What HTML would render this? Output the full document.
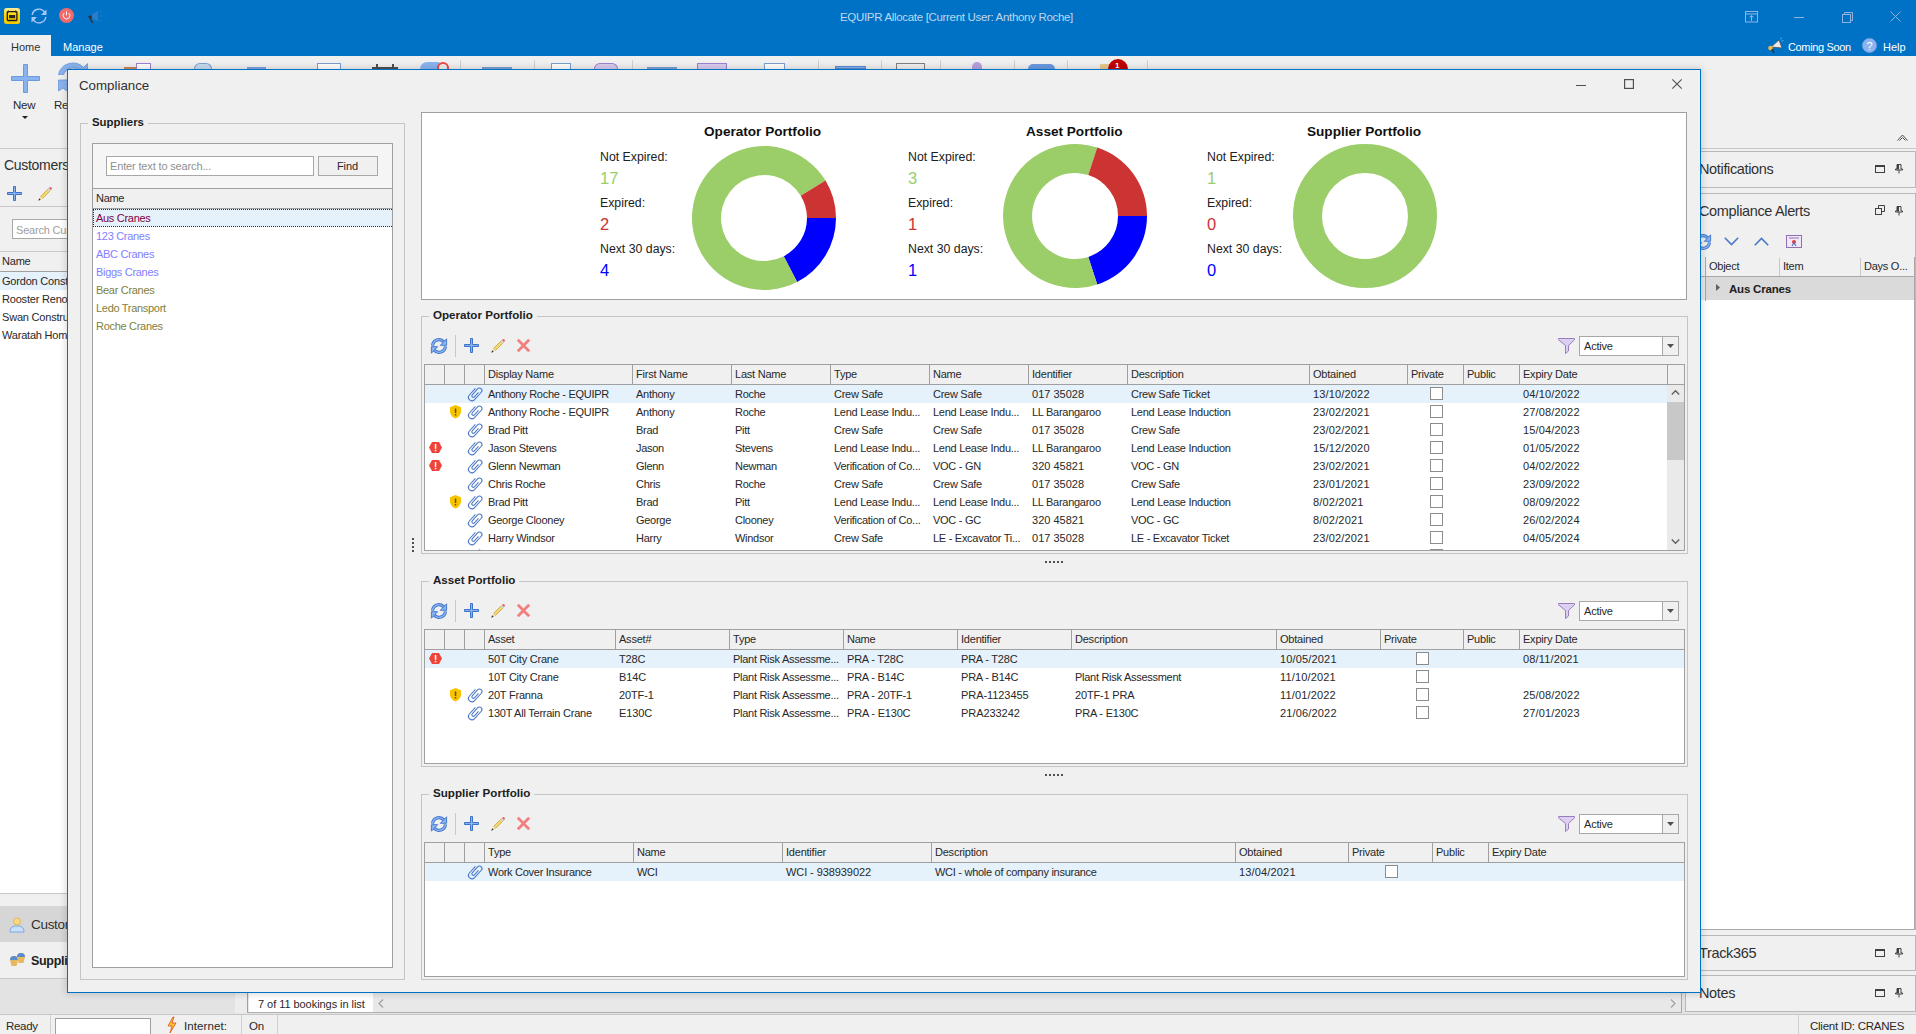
<!DOCTYPE html>
<html><head><meta charset="utf-8"><title>EQUIPR Allocate</title>
<style>
html,body{margin:0;padding:0;}
body{width:1916px;height:1034px;overflow:hidden;position:relative;background:#F0F0F0;font-family:"Liberation Sans", sans-serif;}
svg{display:block;overflow:visible}
</style></head><body>
<div style="position:absolute;left:0px;top:0px;width:1916px;height:56px;background:#0072C6"></div><div style="position:absolute;left:0px;top:35px;width:51px;height:21px;background:#F0F0F0"></div><div style="position:absolute;left:11px;top:41px;font-size:11px;line-height:13px;color:#303030;font-weight:400;white-space:nowrap;">Home</div><div style="position:absolute;left:63px;top:41px;font-size:11px;line-height:13px;color:#FFFFFF;font-weight:400;white-space:nowrap;">Manage</div><div style="position:absolute;left:840px;top:11px;font-size:11.5px;line-height:13px;color:#BFD7EE;font-weight:400;letter-spacing:-0.32px;white-space:nowrap;">EQUIPR Allocate [Current User: Anthony Roche]</div><svg style="position:absolute;left:4px;top:8px;" width="16" height="16" viewBox="0 0 16 16"><defs><linearGradient id="cg" x1="0" y1="0" x2="0" y2="1"><stop offset="0" stop-color="#F8EBA0"/><stop offset="0.45" stop-color="#FFD400"/><stop offset="1" stop-color="#F5C800"/></linearGradient></defs><rect x="0" y="0" width="16" height="16" rx="2.5" fill="url(#cg)"/><rect x="3.3" y="3.7" width="9.6" height="8.8" rx="0.8" fill="none" stroke="#1A1A1A" stroke-width="1.3"/><path d="M4.5 2.5 V4.5 M11.5 2.5 V4.5" stroke="#303030" stroke-width="1"/><rect x="5" y="7" width="6.2" height="3.2" fill="#302810"/></svg><svg style="position:absolute;left:31px;top:8px;" width="16" height="16" viewBox="0 0 16 16"><g fill="none" stroke="#A8C8F8" stroke-width="1.4"><path d="M1.2 7 A6.8 6.8 0 0 1 13.8 4.5"/><path d="M14.8 9 A6.8 6.8 0 0 1 2.2 11.5"/></g><path d="M15.5 1.5 V7 H10 Z" fill="#A8C8F8"/><path d="M0.5 14.5 V9 H6 Z" fill="#A8C8F8"/></svg><svg style="position:absolute;left:59px;top:8px;" width="15" height="15" viewBox="0 0 15 15"><circle cx="7.5" cy="7.5" r="7.5" fill="#F06A6A"/><path d="M5.2 5 A3.4 3.4 0 1 0 9.8 5" fill="none" stroke="#fff" stroke-width="0.9"/><path d="M7.5 3.2 V7.4" stroke="#fff" stroke-width="0.9"/></svg><svg style="position:absolute;left:86px;top:9px;" width="17" height="15" viewBox="0 0 17 15"><path d="M5 6 L12 1.5 V12.5 L5 9 Z" fill="#3A80C8" opacity="0.75"/><path d="M13.5 3 L16 1.5 M13.5 7 H16.5 M13.5 11 L16 12.5" stroke="#3A80C8" stroke-width="0.8" opacity="0.6"/><path d="M2 7.5 L5.5 6 L6 9.5 L4 10 Z" fill="#303030"/><path d="M4.5 10 L6.5 14" stroke="#303030" stroke-width="1.6"/></svg><svg style="position:absolute;left:1745px;top:11px;" width="13" height="12" viewBox="0 0 13 12"><rect x="0.5" y="0.5" width="12" height="10.5" fill="none" stroke="#8DB6E2"/><path d="M0.5 3 H12.5 M6.5 10 V4.5 M4.5 6.5 L6.5 4.5 L8.5 6.5" fill="none" stroke="#8DB6E2"/></svg><div style="position:absolute;left:1794px;top:17px;width:10px;height:1px;background:#8DB6E2"></div><svg style="position:absolute;left:1842px;top:12px;" width="11" height="11" viewBox="0 0 11 11"><rect x="0.5" y="2.5" width="8" height="8" fill="none" stroke="#8DB6E2"/><path d="M2.5 2.5 V0.5 H10.5 V8.5 H8.5" fill="none" stroke="#8DB6E2"/></svg><svg style="position:absolute;left:1890px;top:11px;" width="11" height="11" viewBox="0 0 11 11"><path d="M0.5 0.5 L10.5 10.5 M10.5 0.5 L0.5 10.5" stroke="#8DB6E2" stroke-width="1"/></svg><svg style="position:absolute;left:1767px;top:38px;" width="17" height="16" viewBox="0 0 17 16"><path d="M4 9 L12 2 L15 10 Z" fill="#E8E8E8" stroke="#505050" stroke-width="0.8"/><circle cx="3.5" cy="10" r="2.3" fill="#F4B840"/><path d="M5 11 L7 15" stroke="#303030" stroke-width="1.5"/><path d="M13 1 L15 0 M14.5 3 L16.5 2.5" stroke="#60C0E0" stroke-width="0.8"/></svg><div style="position:absolute;left:1788px;top:41px;font-size:11px;line-height:13px;color:#FFFFFF;font-weight:400;letter-spacing:-0.35px;white-space:nowrap;">Coming Soon</div><svg style="position:absolute;left:1862px;top:38px;" width="15" height="15" viewBox="0 0 15 15"><circle cx="7.5" cy="7.5" r="7.2" fill="#8AB4F0" stroke="#6A94D8" stroke-width="0.6"/><text x="7.5" y="11.5" font-size="11" text-anchor="middle" fill="#fff" font-family="Liberation Sans">?</text></svg><div style="position:absolute;left:1883px;top:41px;font-size:11px;line-height:13px;color:#FFFFFF;font-weight:400;white-space:nowrap;">Help</div><div style="position:absolute;left:0px;top:56px;width:1916px;height:92px;background:#F0F0F0"></div><div style="position:absolute;left:0px;top:148px;width:1916px;height:1px;background:#C8C8C8"></div><svg style="position:absolute;left:11px;top:64px;" width="30" height="29" viewBox="0 0 30 29"><path d="M12.5 0.5 H16.5 V12.5 H28.5 V16.5 H16.5 V28.5 H12.5 V16.5 H0.5 V12.5 H12.5 Z" fill="#8AB4F0" stroke="#6A9AE0" stroke-width="1"/></svg><div style="position:absolute;left:13px;top:99px;font-size:11.5px;line-height:13px;color:#282828;font-weight:400;letter-spacing:-0.2px;white-space:nowrap;">New</div><svg style="position:absolute;left:22px;top:116px;" width="6" height="3" viewBox="0 0 6 3"><path d="M0 0 H6 L3 3 Z" fill="#202020"/></svg><div style="position:absolute;left:54px;top:99px;font-size:11.5px;line-height:13px;color:#282828;font-weight:400;letter-spacing:-0.2px;white-space:nowrap;">Re</div><svg style="position:absolute;left:50px;top:56px;" width="50" height="44" viewBox="0 0 50 44"><path d="M8.4 18.5 A15 15 0 0 1 33.6 11.4 L37.5 7.5 V21 H24 L30.07 14.93 A10 10 0 0 0 13.6 18.5 Z" fill="#8AB4F0" stroke="#6A98DC" stroke-width="0.8"/><path d="M8.5 24 H20 L16.5 27.5 A9.5 9.5 0 0 0 28 31 L32 34 A14.5 14.5 0 0 1 13 32 L8.5 35 Z" fill="#8AB4F0" stroke="#6A98DC" stroke-width="0.8"/></svg><div style="position:absolute;left:124px;top:67px;width:13px;height:2px;background:#D08850"></div><div style="position:absolute;left:136px;top:63px;width:15px;height:6px;background:#fff;border:1px solid #A080D0;border-bottom:none;box-sizing:border-box"></div><div style="position:absolute;left:194px;top:63px;width:18px;height:6px;background:#C8DCF0;border:1px solid #7AA0D0;border-radius:9px 9px 0 0;border-bottom:none;box-sizing:border-box"></div><div style="position:absolute;left:247px;top:67px;width:19px;height:2px;background:#7AA4E0"></div><div style="position:absolute;left:317px;top:63px;width:24px;height:6px;background:#fff;border:1px solid #7AA0D0;border-bottom:none;box-sizing:border-box"></div><div style="position:absolute;left:372px;top:67px;width:26px;height:2px;background:#505050"></div><div style="position:absolute;left:376px;top:64px;width:2px;height:3px;background:#505050"></div><div style="position:absolute;left:392px;top:64px;width:2px;height:3px;background:#505050"></div><div style="position:absolute;left:420px;top:62px;width:24px;height:7px;background:#8AB4F0;border-radius:12px 12px 0 0"></div><div style="position:absolute;left:437px;top:62px;width:12px;height:7px;background:#F0F0F0;border:2px solid #F04848;border-radius:6px 6px 0 0;border-bottom:none;box-sizing:border-box"></div><div style="position:absolute;left:460px;top:60px;width:1px;height:9px;background:#D0D0D0"></div><div style="position:absolute;left:482px;top:67px;width:30px;height:2px;background:#7AA0D0"></div><div style="position:absolute;left:534px;top:60px;width:1px;height:9px;background:#D0D0D0"></div><div style="position:absolute;left:551px;top:63px;width:20px;height:6px;background:#fff;border:1px solid #7AA0D0;border-bottom:none;box-sizing:border-box"></div><div style="position:absolute;left:594px;top:63px;width:24px;height:6px;background:#D8CCF0;border:1px solid #A080D0;border-radius:12px 12px 0 0;border-bottom:none;box-sizing:border-box"></div><div style="position:absolute;left:632px;top:60px;width:1px;height:9px;background:#D0D0D0"></div><div style="position:absolute;left:647px;top:67px;width:30px;height:2px;background:#7AA0D0"></div><div style="position:absolute;left:697px;top:63px;width:30px;height:6px;background:#D8CCF0;border:1px solid #A080D0;border-bottom:none;box-sizing:border-box"></div><div style="position:absolute;left:764px;top:63px;width:21px;height:6px;background:#fff;border:1px solid #7AA0D0;border-bottom:none;box-sizing:border-box"></div><div style="position:absolute;left:818px;top:60px;width:1px;height:9px;background:#D0D0D0"></div><div style="position:absolute;left:835px;top:66px;width:31px;height:3px;background:#8AB4F0;border:1px solid #5A8AD0;box-sizing:border-box"></div><div style="position:absolute;left:881px;top:60px;width:1px;height:9px;background:#D0D0D0"></div><div style="position:absolute;left:896px;top:63px;width:29px;height:6px;background:#F0F0F0;border:1px solid #808080;border-bottom:none;box-sizing:border-box"></div><div style="position:absolute;left:940px;top:60px;width:1px;height:9px;background:#D0D0D0"></div><div style="position:absolute;left:972px;top:62px;width:10px;height:7px;background:#B8A0E0;border-radius:5px 5px 0 0"></div><div style="position:absolute;left:1014px;top:60px;width:1px;height:9px;background:#D0D0D0"></div><div style="position:absolute;left:1028px;top:64px;width:27px;height:5px;background:#6A9AE0;border-radius:14px 14px 0 0"></div><div style="position:absolute;left:1067px;top:60px;width:1px;height:9px;background:#D0D0D0"></div><div style="position:absolute;left:1100px;top:64px;width:10px;height:5px;background:#E8C890"></div><div style="position:absolute;left:1108px;top:59px;width:20px;height:10px;background:#C00000;border-radius:10px 10px 0 0"></div><div style="position:absolute;left:1115px;top:61px;font-size:8px;line-height:9px;color:#fff;font-weight:700;white-space:nowrap;">1</div><div style="position:absolute;left:1147px;top:60px;width:1px;height:9px;background:#D0D0D0"></div><svg style="position:absolute;left:1897px;top:133px;" width="11" height="8" viewBox="0 0 11 8"><path d="M0.5 7.5 L5.5 2 L10.5 7.5 M2.5 7.5 L5.5 4.5 L8.5 7.5" fill="none" stroke="#505050" stroke-width="1"/></svg><div style="position:absolute;left:4px;top:157px;font-size:14px;line-height:16px;color:#303030;font-weight:400;letter-spacing:-0.3px;white-space:nowrap;">Customers</div><svg style="position:absolute;left:7px;top:186px;" width="15" height="15" viewBox="0 0 15 15"><path d="M6.5 0.5 H8.5 V6.5 H14.5 V8.5 H8.5 V14.5 H6.5 V8.5 H0.5 V6.5 H6.5 Z" fill="#8AB4F0" stroke="#3D72C8" stroke-width="1"/></svg><svg style="position:absolute;left:37px;top:186px;" width="16" height="16" viewBox="0 0 16 16"><path d="M3.5 10.5 L11 3 L13 5 L5.5 12.5 Z" fill="#F2D670" stroke="#C9A540" stroke-width="0.8"/>
<path d="M11 3 L12.5 1.5 A1.2 1.2 0 0 1 14.5 3.5 L13 5 Z" fill="#E86060"/>
<path d="M10.6 3.4 L12 2 L14 4 L12.6 5.4 Z" fill="#C8D8E8"/>
<path d="M3.5 10.5 L5.5 12.5 L1.5 14.5 Z" fill="#F5E3B0"/>
<path d="M2.3 12.3 L3.7 13.7 L1.2 14.8 Z" fill="#303030"/></svg><div style="position:absolute;left:0px;top:206px;width:67px;height:1px;background:#C8C8C8"></div><div style="position:absolute;left:12px;top:219px;width:80px;height:20px;background:#fff;border:1px solid #A8A8A8;box-sizing:border-box"></div><div style="position:absolute;left:16px;top:224px;font-size:11px;line-height:13px;color:#A0A0A0;font-weight:400;letter-spacing:-0.2px;white-space:nowrap;">Search Customers</div><div style="position:absolute;left:0px;top:251px;width:67px;height:1px;background:#C8C8C8"></div><div style="position:absolute;left:0px;top:252px;width:67px;height:20px;background:#F0F0F0"></div><div style="position:absolute;left:2px;top:255px;font-size:11px;line-height:13px;color:#282828;font-weight:400;letter-spacing:-0.2px;white-space:nowrap;">Name</div><div style="position:absolute;left:0px;top:271px;width:67px;height:1px;background:#A0A0A0"></div><div style="position:absolute;left:0px;top:272px;width:67px;height:621px;background:#fff"></div><div style="position:absolute;left:0px;top:272px;width:67px;height:18px;background:#E5F1FB"></div><div style="position:absolute;left:2px;top:275px;font-size:11px;line-height:13px;color:#282828;font-weight:400;letter-spacing:-0.2px;white-space:nowrap;">Gordon Construction</div><div style="position:absolute;left:2px;top:293px;font-size:11px;line-height:13px;color:#282828;font-weight:400;letter-spacing:-0.2px;white-space:nowrap;">Rooster Renovations</div><div style="position:absolute;left:2px;top:311px;font-size:11px;line-height:13px;color:#282828;font-weight:400;letter-spacing:-0.2px;white-space:nowrap;">Swan Construction</div><div style="position:absolute;left:2px;top:329px;font-size:11px;line-height:13px;color:#282828;font-weight:400;letter-spacing:-0.2px;white-space:nowrap;">Waratah Homes</div><div style="position:absolute;left:0px;top:893px;width:67px;height:1px;background:#C8C8C8"></div><div style="position:absolute;left:0px;top:906px;width:67px;height:36px;background:#D6D6D6"></div><svg style="position:absolute;left:9px;top:917px;" width="16" height="16" viewBox="0 0 16 16"><circle cx="8" cy="4.5" r="3.5" fill="#F8D880" stroke="#D8B050" stroke-width="0.8"/><path d="M1 15 C1 10 4 9 8 9 C12 9 15 10 15 15 Z" fill="#C8E0F8" stroke="#6A9AE0" stroke-width="0.8"/></svg><div style="position:absolute;left:31px;top:917px;font-size:13.5px;line-height:16px;color:#303030;font-weight:400;letter-spacing:-0.3px;white-space:nowrap;">Customers</div><svg style="position:absolute;left:9px;top:952px;" width="17" height="17" viewBox="0 0 17 17"><path d="M1 8 A4 4 0 0 1 9 8 L7.5 14 L2.5 14 Z" fill="#E8B860"/><path d="M1 8 A4 4 0 0 1 9 8 Z" fill="#5A8AD0"/><path d="M8 5 A4 4 0 0 1 16 5 L14.5 11 L9.5 11 Z" fill="#E8B860"/><path d="M8 5 A4 4 0 0 1 16 5 Z" fill="#5A8AD0"/></svg><div style="position:absolute;left:31px;top:954px;font-size:12.5px;line-height:14px;color:#202020;font-weight:700;letter-spacing:-0.3px;white-space:nowrap;">Suppliers</div><div style="position:absolute;left:0px;top:978px;width:235px;height:1px;background:#C8C8C8"></div><div style="position:absolute;left:0px;top:979px;width:1916px;height:35px;background:#E3E3E3"></div><div style="position:absolute;left:235px;top:993px;width:1447px;height:20px;background:#EDEDED"></div><div style="position:absolute;left:247px;top:993px;width:1px;height:20px;background:#A0A0A0"></div><div style="position:absolute;left:248px;top:993px;width:1433px;height:19px;background:#E8E8E8"></div><div style="position:absolute;left:1681px;top:993px;width:1px;height:20px;background:#A8A8A8"></div><div style="position:absolute;left:249px;top:993px;width:124px;height:19px;background:#fff"></div><div style="position:absolute;left:258px;top:998px;font-size:11px;line-height:13px;color:#282828;font-weight:400;letter-spacing:-0.05px;white-space:nowrap;">7 of 11 bookings in list</div><svg style="position:absolute;left:378px;top:999px;" width="6" height="9" viewBox="0 0 6 9"><path d="M5 0.5 L1 4.5 L5 8.5" fill="none" stroke="#A0A0A0" stroke-width="1.2"/></svg><svg style="position:absolute;left:1670px;top:999px;" width="6" height="9" viewBox="0 0 6 9"><path d="M1 0.5 L5 4.5 L1 8.5" fill="none" stroke="#A0A0A0" stroke-width="1.2"/></svg><div style="position:absolute;left:247px;top:1012px;width:1435px;height:1px;background:#B0B0B0"></div><div style="position:absolute;left:0px;top:1014px;width:1916px;height:1px;background:#C8C8C8"></div><div style="position:absolute;left:0px;top:1015px;width:1916px;height:19px;background:#F0F0F0"></div><div style="position:absolute;left:6px;top:1020px;font-size:11.5px;line-height:13px;color:#282828;font-weight:400;letter-spacing:-0.3px;white-space:nowrap;">Ready</div><div style="position:absolute;left:50px;top:1015px;width:1px;height:19px;background:#D0D0D0"></div><div style="position:absolute;left:55px;top:1018px;width:96px;height:16px;background:#fff;border:1px solid #A0A0A0;box-sizing:border-box;border-bottom:none"></div><svg style="position:absolute;left:167px;top:1017px;" width="10" height="16" viewBox="0 0 10 16"><path d="M6 0 L1 9 H5 L3 16 L9 6 H5 L7 0 Z" fill="#F8C030" stroke="#E05010" stroke-width="0.8"/></svg><div style="position:absolute;left:184px;top:1020px;font-size:11.5px;line-height:13px;color:#282828;font-weight:400;letter-spacing:0.1px;white-space:nowrap;">Internet:</div><div style="position:absolute;left:241px;top:1015px;width:1px;height:19px;background:#D0D0D0"></div><div style="position:absolute;left:249px;top:1020px;font-size:11.5px;line-height:13px;color:#282828;font-weight:400;letter-spacing:-0.2px;white-space:nowrap;">On</div><div style="position:absolute;left:277px;top:1015px;width:1px;height:19px;background:#D0D0D0"></div><div style="position:absolute;left:1798px;top:1015px;width:1px;height:19px;background:#D0D0D0"></div><div style="position:absolute;left:1810px;top:1020px;font-size:11.5px;line-height:13px;color:#282828;font-weight:400;letter-spacing:-0.25px;white-space:nowrap;">Client ID: CRANES</div><div style="position:absolute;left:1685px;top:151px;width:231px;height:37px;background:#F0F0F0;border:1px solid #B8B8B8;box-sizing:border-box"></div><div style="position:absolute;left:1699px;top:161px;font-size:14.5px;line-height:17px;color:#303030;font-weight:400;letter-spacing:-0.35px;white-space:nowrap;">Notifications</div><svg style="position:absolute;left:1875px;top:165px;" width="10" height="8" viewBox="0 0 10 8"><rect x="0.5" y="0.5" width="9" height="7" fill="none" stroke="#404040"/><path d="M0.5 1.5 H9.5" stroke="#404040"/></svg><svg style="position:absolute;left:1895px;top:164px;" width="8" height="10" viewBox="0 0 8 10"><path d="M2 0.5 H6 V5 H7.5 V6 H0.5 V5 H2 Z M4 6 V9.5" fill="none" stroke="#404040"/><rect x="2" y="0.5" width="2" height="5" fill="#404040"/></svg><div style="position:absolute;left:1685px;top:193px;width:231px;height:737px;background:#F0F0F0;border:1px solid #B8B8B8;box-sizing:border-box"></div><div style="position:absolute;left:1699px;top:203px;font-size:14.5px;line-height:17px;color:#303030;font-weight:400;letter-spacing:-0.35px;white-space:nowrap;">Compliance Alerts</div><svg style="position:absolute;left:1875px;top:205px;" width="10" height="10" viewBox="0 0 10 10"><rect x="0.5" y="3.5" width="6" height="6" fill="none" stroke="#404040"/><path d="M3.5 3.5 V0.5 H9.5 V6.5 H6.5" fill="none" stroke="#404040"/></svg><svg style="position:absolute;left:1895px;top:206px;" width="8" height="10" viewBox="0 0 8 10"><path d="M2 0.5 H6 V5 H7.5 V6 H0.5 V5 H2 Z M4 6 V9.5" fill="none" stroke="#404040"/><rect x="2" y="0.5" width="2" height="5" fill="#404040"/></svg><svg style="position:absolute;left:1695px;top:234px;" width="16" height="16" viewBox="0 0 16 16"><path d="M1.6 7.6 A6.4 6.4 0 0 1 12.8 3.9" fill="none" stroke="#3D72C8" stroke-width="3.2"/><path d="M1.6 7.6 A6.4 6.4 0 0 1 12.8 3.9" fill="none" stroke="#8AB4F0" stroke-width="1.4"/><path d="M15.6 0.8 V7.3 H9.3 Z" fill="#8AB4F0" stroke="#3D72C8" stroke-width="0.9" stroke-linejoin="miter"/><g transform="rotate(180 8 8)"><path d="M1.6 7.6 A6.4 6.4 0 0 1 12.8 3.9" fill="none" stroke="#3D72C8" stroke-width="3.2"/><path d="M1.6 7.6 A6.4 6.4 0 0 1 12.8 3.9" fill="none" stroke="#8AB4F0" stroke-width="1.4"/><path d="M15.6 0.8 V7.3 H9.3 Z" fill="#8AB4F0" stroke="#3D72C8" stroke-width="0.9" stroke-linejoin="miter"/></g></svg><svg style="position:absolute;left:1724px;top:237px;" width="15" height="9" viewBox="0 0 15 9"><path d="M0.8 0.8 L7.5 7.5 L14.2 0.8" fill="none" stroke="#4A78C8" stroke-width="1.6"/></svg><svg style="position:absolute;left:1754px;top:237px;" width="15" height="9" viewBox="0 0 15 9"><path d="M0.8 8.2 L7.5 1.5 L14.2 8.2" fill="none" stroke="#4A78C8" stroke-width="1.6"/></svg><svg style="position:absolute;left:1786px;top:235px;" width="16" height="13" viewBox="0 0 16 13"><rect x="0.5" y="0.5" width="15" height="12" fill="#F0E8F8" stroke="#9070B0"/><path d="M3 3 H13" stroke="#9070B0"/><circle cx="8" cy="7" r="2" fill="#E04040"/><path d="M6 11 L8 8 L10 11" fill="none" stroke="#4A78C8" stroke-width="1.2"/></svg><div style="position:absolute;left:1686px;top:300px;width:228px;height:629px;background:#fff"></div><div style="position:absolute;left:1705px;top:257px;width:1px;height:44px;background:#A8A8A8"></div><div style="position:absolute;left:1779px;top:258px;width:1px;height:19px;background:#C8C8C8"></div><div style="position:absolute;left:1860px;top:258px;width:1px;height:19px;background:#C8C8C8"></div><div style="position:absolute;left:1709px;top:260px;font-size:11px;line-height:13px;color:#282828;font-weight:400;letter-spacing:-0.25px;white-space:nowrap;">Object</div><div style="position:absolute;left:1783px;top:260px;font-size:11px;line-height:13px;color:#282828;font-weight:400;letter-spacing:-0.25px;white-space:nowrap;">Item</div><div style="position:absolute;left:1864px;top:260px;font-size:11px;line-height:13px;color:#282828;font-weight:400;letter-spacing:-0.25px;white-space:nowrap;">Days O...</div><div style="position:absolute;left:1686px;top:276px;width:228px;height:1px;background:#A8A8A8"></div><div style="position:absolute;left:1686px;top:277px;width:19px;height:23px;background:#E8E8E8"></div><div style="position:absolute;left:1706px;top:277px;width:208px;height:23px;background:#DADADA"></div><svg style="position:absolute;left:1716px;top:284px;" width="4" height="7" viewBox="0 0 4 7"><path d="M0 0 L4 3.5 L0 7 Z" fill="#606060"/></svg><div style="position:absolute;left:1729px;top:283px;font-size:11.5px;line-height:13px;color:#202020;font-weight:700;letter-spacing:-0.2px;white-space:nowrap;">Aus Cranes</div><div style="position:absolute;left:1686px;top:929px;width:229px;height:1px;background:#A8A8A8"></div><div style="position:absolute;left:1914px;top:257px;width:1px;height:673px;background:#A8A8A8"></div><div style="position:absolute;left:1685px;top:935px;width:231px;height:36px;background:#F0F0F0;border:1px solid #B8B8B8;box-sizing:border-box"></div><div style="position:absolute;left:1699px;top:945px;font-size:14.5px;line-height:17px;color:#303030;font-weight:400;letter-spacing:-0.35px;white-space:nowrap;">Track365</div><svg style="position:absolute;left:1875px;top:949px;" width="10" height="8" viewBox="0 0 10 8"><rect x="0.5" y="0.5" width="9" height="7" fill="none" stroke="#404040"/><path d="M0.5 1.5 H9.5" stroke="#404040"/></svg><svg style="position:absolute;left:1895px;top:948px;" width="8" height="10" viewBox="0 0 8 10"><path d="M2 0.5 H6 V5 H7.5 V6 H0.5 V5 H2 Z M4 6 V9.5" fill="none" stroke="#404040"/><rect x="2" y="0.5" width="2" height="5" fill="#404040"/></svg><div style="position:absolute;left:1685px;top:975px;width:231px;height:37px;background:#F0F0F0;border:1px solid #B8B8B8;box-sizing:border-box"></div><div style="position:absolute;left:1699px;top:985px;font-size:14.5px;line-height:17px;color:#303030;font-weight:400;letter-spacing:-0.35px;white-space:nowrap;">Notes</div><svg style="position:absolute;left:1875px;top:989px;" width="10" height="8" viewBox="0 0 10 8"><rect x="0.5" y="0.5" width="9" height="7" fill="none" stroke="#404040"/><path d="M0.5 1.5 H9.5" stroke="#404040"/></svg><svg style="position:absolute;left:1895px;top:988px;" width="8" height="10" viewBox="0 0 8 10"><path d="M2 0.5 H6 V5 H7.5 V6 H0.5 V5 H2 Z M4 6 V9.5" fill="none" stroke="#404040"/><rect x="2" y="0.5" width="2" height="5" fill="#404040"/></svg><div style="position:absolute;left:67px;top:69px;width:1634px;height:924px;background:#F0F0F0;border:1px solid #0072C6;box-sizing:border-box;box-shadow:0 0 7px 1px rgba(0,0,0,0.16)"></div><div style="position:absolute;left:79px;top:78px;font-size:13.3px;line-height:15px;color:#303030;font-weight:400;white-space:nowrap;">Compliance</div><div style="position:absolute;left:1576px;top:85px;width:10px;height:1px;background:#505050"></div><svg style="position:absolute;left:1624px;top:79px;" width="10" height="10" viewBox="0 0 10 10"><rect x="0.6" y="0.6" width="8.8" height="8.8" fill="none" stroke="#505050" stroke-width="1.2"/></svg><svg style="position:absolute;left:1672px;top:79px;" width="10" height="10" viewBox="0 0 10 10"><path d="M0.3 0.3 L9.7 9.7 M9.7 0.3 L0.3 9.7" stroke="#505050" stroke-width="1.1"/></svg><div style="position:absolute;left:80px;top:123px;width:325px;height:857px;border:1px solid #C4C4C4;box-sizing:border-box"></div><div style="position:absolute;left:88px;top:114px;height:16px;background:#F0F0F0;padding:0 4px;font-size:11.4px;line-height:16px;font-weight:700;color:#202020;white-space:nowrap;letter-spacing:0px">Suppliers</div><div style="position:absolute;left:92px;top:143px;width:301px;height:825px;background:#fff;border:1px solid #A0A0A0;box-sizing:border-box"></div><div style="position:absolute;left:93px;top:144px;width:299px;height:44px;background:#F5F5F5"></div><div style="position:absolute;left:106px;top:156px;width:208px;height:20px;background:#fff;border:1px solid #A8A8A8;box-sizing:border-box"></div><div style="position:absolute;left:110px;top:160px;font-size:11px;line-height:13px;color:#909090;font-weight:400;letter-spacing:-0.15px;white-space:nowrap;">Enter text to search...</div><div style="position:absolute;left:318px;top:156px;width:60px;height:20px;background:#F0F0F0;border:1px solid #A8A8A8;box-sizing:border-box"></div><div style="position:absolute;left:337px;top:160px;font-size:11px;line-height:13px;color:#282828;font-weight:400;letter-spacing:-0.1px;white-space:nowrap;">Find</div><div style="position:absolute;left:93px;top:188px;width:299px;height:1px;background:#A0A0A0"></div><div style="position:absolute;left:93px;top:189px;width:299px;height:19px;background:#F0F0F0"></div><div style="position:absolute;left:96px;top:192px;font-size:11px;line-height:13px;color:#282828;font-weight:400;letter-spacing:-0.3px;white-space:nowrap;">Name</div><div style="position:absolute;left:93px;top:208px;width:299px;height:1px;background:#A0A0A0"></div><div style="position:absolute;left:93px;top:209px;width:299px;height:18px;background:#E5F1FB"></div><div style="position:absolute;left:93px;top:209px;width:299px;height:18px;border:1px dotted #800040;border-right:none;box-sizing:border-box"></div><div style="position:absolute;left:96px;top:212px;font-size:11px;line-height:13px;color:#800040;font-weight:400;letter-spacing:-0.3px;white-space:nowrap;">Aus Cranes</div><div style="position:absolute;left:96px;top:230px;font-size:11px;line-height:13px;color:#8080FF;font-weight:400;letter-spacing:-0.3px;white-space:nowrap;">123 Cranes</div><div style="position:absolute;left:96px;top:248px;font-size:11px;line-height:13px;color:#8080FF;font-weight:400;letter-spacing:-0.3px;white-space:nowrap;">ABC Cranes</div><div style="position:absolute;left:96px;top:266px;font-size:11px;line-height:13px;color:#8080FF;font-weight:400;letter-spacing:-0.3px;white-space:nowrap;">Biggs Cranes</div><div style="position:absolute;left:96px;top:284px;font-size:11px;line-height:13px;color:#808040;font-weight:400;letter-spacing:-0.3px;white-space:nowrap;">Bear Cranes</div><div style="position:absolute;left:96px;top:302px;font-size:11px;line-height:13px;color:#808040;font-weight:400;letter-spacing:-0.3px;white-space:nowrap;">Ledo Transport</div><div style="position:absolute;left:96px;top:320px;font-size:11px;line-height:13px;color:#808040;font-weight:400;letter-spacing:-0.3px;white-space:nowrap;">Roche Cranes</div><div style="position:absolute;left:412px;top:538px;width:2px;height:2px;background:#505050"></div><div style="position:absolute;left:412px;top:542px;width:2px;height:2px;background:#505050"></div><div style="position:absolute;left:412px;top:546px;width:2px;height:2px;background:#505050"></div><div style="position:absolute;left:412px;top:550px;width:2px;height:2px;background:#505050"></div><div style="position:absolute;left:421px;top:112px;width:1266px;height:188px;background:#fff;border:1px solid #A0A0A0;box-sizing:border-box"></div><div style="position:absolute;left:704px;top:124px;font-size:13.6px;line-height:16px;color:#101010;font-weight:700;white-space:nowrap;">Operator Portfolio</div><div style="position:absolute;left:600px;top:150px;font-size:12.3px;line-height:14px;color:#202020;font-weight:400;white-space:nowrap;">Not Expired:</div><div style="position:absolute;left:600px;top:169px;font-size:16.5px;line-height:19px;color:#9BCD69;font-weight:400;white-space:nowrap;">17</div><div style="position:absolute;left:600px;top:196px;font-size:12.3px;line-height:14px;color:#202020;font-weight:400;white-space:nowrap;">Expired:</div><div style="position:absolute;left:600px;top:215px;font-size:16.5px;line-height:19px;color:#CC3333;font-weight:400;white-space:nowrap;">2</div><div style="position:absolute;left:600px;top:242px;font-size:12.3px;line-height:14px;color:#202020;font-weight:400;white-space:nowrap;">Next 30 days:</div><div style="position:absolute;left:600px;top:261px;font-size:16.5px;line-height:19px;color:#0000FF;font-weight:400;white-space:nowrap;">4</div><svg style="position:absolute;left:0;top:0" width="1916" height="1034"><path d="M836.00 218.00 A72 72 0 0 1 797.12 281.93 L783.78 256.18 A43 43 0 0 0 807.00 218.00 Z" fill="#0000FF"/><path d="M797.12 281.93 A72 72 0 1 1 825.52 180.59 L800.74 195.66 A43 43 0 1 0 783.78 256.18 Z" fill="#9BCD69"/><path d="M825.52 180.59 A72 72 0 0 1 836.00 218.00 L807.00 218.00 A43 43 0 0 0 800.74 195.66 Z" fill="#CC3333"/></svg><div style="position:absolute;left:1026px;top:124px;font-size:13.6px;line-height:16px;color:#101010;font-weight:700;white-space:nowrap;">Asset Portfolio</div><div style="position:absolute;left:908px;top:150px;font-size:12.3px;line-height:14px;color:#202020;font-weight:400;white-space:nowrap;">Not Expired:</div><div style="position:absolute;left:908px;top:169px;font-size:16.5px;line-height:19px;color:#9BCD69;font-weight:400;white-space:nowrap;">3</div><div style="position:absolute;left:908px;top:196px;font-size:12.3px;line-height:14px;color:#202020;font-weight:400;white-space:nowrap;">Expired:</div><div style="position:absolute;left:908px;top:215px;font-size:16.5px;line-height:19px;color:#CC3333;font-weight:400;white-space:nowrap;">1</div><div style="position:absolute;left:908px;top:242px;font-size:12.3px;line-height:14px;color:#202020;font-weight:400;white-space:nowrap;">Next 30 days:</div><div style="position:absolute;left:908px;top:261px;font-size:16.5px;line-height:19px;color:#0000FF;font-weight:400;white-space:nowrap;">1</div><svg style="position:absolute;left:0;top:0" width="1916" height="1034"><path d="M1147.00 216.00 A72 72 0 0 1 1097.25 284.48 L1088.29 256.90 A43 43 0 0 0 1118.00 216.00 Z" fill="#0000FF"/><path d="M1097.25 284.48 A72 72 0 1 1 1097.25 147.52 L1088.29 175.10 A43 43 0 1 0 1088.29 256.90 Z" fill="#9BCD69"/><path d="M1097.25 147.52 A72 72 0 0 1 1147.00 216.00 L1118.00 216.00 A43 43 0 0 0 1088.29 175.10 Z" fill="#CC3333"/></svg><div style="position:absolute;left:1307px;top:124px;font-size:13.6px;line-height:16px;color:#101010;font-weight:700;white-space:nowrap;">Supplier Portfolio</div><div style="position:absolute;left:1207px;top:150px;font-size:12.3px;line-height:14px;color:#202020;font-weight:400;white-space:nowrap;">Not Expired:</div><div style="position:absolute;left:1207px;top:169px;font-size:16.5px;line-height:19px;color:#9BCD69;font-weight:400;white-space:nowrap;">1</div><div style="position:absolute;left:1207px;top:196px;font-size:12.3px;line-height:14px;color:#202020;font-weight:400;white-space:nowrap;">Expired:</div><div style="position:absolute;left:1207px;top:215px;font-size:16.5px;line-height:19px;color:#CC3333;font-weight:400;white-space:nowrap;">0</div><div style="position:absolute;left:1207px;top:242px;font-size:12.3px;line-height:14px;color:#202020;font-weight:400;white-space:nowrap;">Next 30 days:</div><div style="position:absolute;left:1207px;top:261px;font-size:16.5px;line-height:19px;color:#0000FF;font-weight:400;white-space:nowrap;">0</div><svg style="position:absolute;left:0;top:0" width="1916" height="1034"><circle cx="1365" cy="216" r="57.5" fill="none" stroke="#9BCD69" stroke-width="29"/></svg><div style="position:absolute;left:421px;top:316px;width:1267px;height:238px;border:1px solid #C4C4C4;box-sizing:border-box"></div><div style="position:absolute;left:429px;top:307px;height:16px;background:#F0F0F0;padding:0 4px;font-size:11.6px;line-height:16px;font-weight:700;color:#202020;white-space:nowrap;letter-spacing:0px">Operator Portfolio</div><svg style="position:absolute;left:431px;top:338px;" width="16" height="16" viewBox="0 0 16 16"><path d="M1.6 7.6 A6.4 6.4 0 0 1 12.8 3.9" fill="none" stroke="#3D72C8" stroke-width="3.2"/><path d="M1.6 7.6 A6.4 6.4 0 0 1 12.8 3.9" fill="none" stroke="#8AB4F0" stroke-width="1.4"/><path d="M15.6 0.8 V7.3 H9.3 Z" fill="#8AB4F0" stroke="#3D72C8" stroke-width="0.9" stroke-linejoin="miter"/><g transform="rotate(180 8 8)"><path d="M1.6 7.6 A6.4 6.4 0 0 1 12.8 3.9" fill="none" stroke="#3D72C8" stroke-width="3.2"/><path d="M1.6 7.6 A6.4 6.4 0 0 1 12.8 3.9" fill="none" stroke="#8AB4F0" stroke-width="1.4"/><path d="M15.6 0.8 V7.3 H9.3 Z" fill="#8AB4F0" stroke="#3D72C8" stroke-width="0.9" stroke-linejoin="miter"/></g></svg><div style="position:absolute;left:455px;top:335px;width:1px;height:22px;background:#C8C8C8"></div><svg style="position:absolute;left:464px;top:338px;" width="15" height="15" viewBox="0 0 15 15"><path d="M6.5 0.5 H8.5 V6.5 H14.5 V8.5 H8.5 V14.5 H6.5 V8.5 H0.5 V6.5 H6.5 Z" fill="#8AB4F0" stroke="#3D72C8" stroke-width="1"/></svg><svg style="position:absolute;left:490px;top:338px;" width="16" height="16" viewBox="0 0 16 16"><path d="M3.5 10.5 L11 3 L13 5 L5.5 12.5 Z" fill="#F2D670" stroke="#C9A540" stroke-width="0.8"/>
<path d="M11 3 L12.5 1.5 A1.2 1.2 0 0 1 14.5 3.5 L13 5 Z" fill="#E86060"/>
<path d="M10.6 3.4 L12 2 L14 4 L12.6 5.4 Z" fill="#C8D8E8"/>
<path d="M3.5 10.5 L5.5 12.5 L1.5 14.5 Z" fill="#F5E3B0"/>
<path d="M2.3 12.3 L3.7 13.7 L1.2 14.8 Z" fill="#303030"/></svg><svg style="position:absolute;left:517px;top:339px;" width="13" height="13" viewBox="0 0 13 13"><path d="M1.8 1.8 L11.2 11.2 M11.2 1.8 L1.8 11.2" stroke="#F08080" stroke-width="2.8" stroke-linecap="square"/></svg><svg style="position:absolute;left:1558px;top:338px;" width="17" height="16" viewBox="0 0 17 16"><path d="M0.5 0.5 H16.5 V1.8 L10.5 7.5 V13 L7.5 15.5 V7.5 L0.5 1.8 Z" fill="#DCD0F0" stroke="#9C7CC0" stroke-width="1" stroke-linejoin="round"/></svg><div style="position:absolute;left:1579px;top:336px;width:100px;height:20px;background:#fff;border:1px solid #A8A8A8;box-sizing:border-box"></div><div style="position:absolute;left:1662px;top:336px;width:1px;height:20px;background:#A8A8A8"></div><div style="position:absolute;left:1663px;top:337px;width:15px;height:18px;background:#F0F0F0"></div><svg style="position:absolute;left:1667px;top:344px;" width="7" height="4" viewBox="0 0 7 4"><path d="M0 0 H7 L3.5 4 Z" fill="#505050"/></svg><div style="position:absolute;left:1584px;top:340px;font-size:11px;line-height:13px;color:#282828;font-weight:400;letter-spacing:-0.2px;white-space:nowrap;">Active</div><div style="position:absolute;left:424px;top:364px;width:1261px;height:187px;background:#fff;border:1px solid #A0A0A0;box-sizing:border-box"></div><div style="position:absolute;left:425px;top:365px;width:1259px;height:19px;background:#F0F0F0"></div><div style="position:absolute;left:425px;top:384px;width:1259px;height:1px;background:#A0A0A0"></div><div style="position:absolute;left:444px;top:365px;width:1px;height:19px;background:#A0A0A0"></div><div style="position:absolute;left:464px;top:365px;width:1px;height:19px;background:#A0A0A0"></div><div style="position:absolute;left:484px;top:365px;width:1px;height:19px;background:#A0A0A0"></div><div style="position:absolute;left:632px;top:365px;width:1px;height:19px;background:#A0A0A0"></div><div style="position:absolute;left:731px;top:365px;width:1px;height:19px;background:#A0A0A0"></div><div style="position:absolute;left:830px;top:365px;width:1px;height:19px;background:#A0A0A0"></div><div style="position:absolute;left:929px;top:365px;width:1px;height:19px;background:#A0A0A0"></div><div style="position:absolute;left:1028px;top:365px;width:1px;height:19px;background:#A0A0A0"></div><div style="position:absolute;left:1127px;top:365px;width:1px;height:19px;background:#A0A0A0"></div><div style="position:absolute;left:1309px;top:365px;width:1px;height:19px;background:#A0A0A0"></div><div style="position:absolute;left:1407px;top:365px;width:1px;height:19px;background:#A0A0A0"></div><div style="position:absolute;left:1463px;top:365px;width:1px;height:19px;background:#A0A0A0"></div><div style="position:absolute;left:1519px;top:365px;width:1px;height:19px;background:#A0A0A0"></div><div style="position:absolute;left:1667px;top:365px;width:1px;height:19px;background:#A0A0A0"></div><div style="position:absolute;left:488px;top:368px;font-size:11px;line-height:13px;color:#282828;font-weight:400;letter-spacing:-0.22px;white-space:nowrap;">Display Name</div><div style="position:absolute;left:636px;top:368px;font-size:11px;line-height:13px;color:#282828;font-weight:400;letter-spacing:-0.22px;white-space:nowrap;">First Name</div><div style="position:absolute;left:735px;top:368px;font-size:11px;line-height:13px;color:#282828;font-weight:400;letter-spacing:-0.22px;white-space:nowrap;">Last Name</div><div style="position:absolute;left:834px;top:368px;font-size:11px;line-height:13px;color:#282828;font-weight:400;letter-spacing:-0.22px;white-space:nowrap;">Type</div><div style="position:absolute;left:933px;top:368px;font-size:11px;line-height:13px;color:#282828;font-weight:400;letter-spacing:-0.22px;white-space:nowrap;">Name</div><div style="position:absolute;left:1032px;top:368px;font-size:11px;line-height:13px;color:#282828;font-weight:400;letter-spacing:-0.22px;white-space:nowrap;">Identifier</div><div style="position:absolute;left:1131px;top:368px;font-size:11px;line-height:13px;color:#282828;font-weight:400;letter-spacing:-0.22px;white-space:nowrap;">Description</div><div style="position:absolute;left:1313px;top:368px;font-size:11px;line-height:13px;color:#282828;font-weight:400;letter-spacing:-0.22px;white-space:nowrap;">Obtained</div><div style="position:absolute;left:1411px;top:368px;font-size:11px;line-height:13px;color:#282828;font-weight:400;letter-spacing:-0.22px;white-space:nowrap;">Private</div><div style="position:absolute;left:1467px;top:368px;font-size:11px;line-height:13px;color:#282828;font-weight:400;letter-spacing:-0.22px;white-space:nowrap;">Public</div><div style="position:absolute;left:1523px;top:368px;font-size:11px;line-height:13px;color:#282828;font-weight:400;letter-spacing:-0.22px;white-space:nowrap;">Expiry Date</div><div style="position:absolute;left:425px;top:385px;width:1259px;height:18px;background:#E5F1FB"></div><svg style="position:absolute;left:467px;top:386px;" width="16" height="16" viewBox="0 0 16 16"><g transform="translate(8 8) rotate(42) translate(0 -0.5)"><path d="M-3.5 -4 V5 A3.5 3.5 0 0 0 3.5 5 V-5 A2.5 2.5 0 0 0 -1.5 -5 V3 A1.5 1.5 0 0 0 1.5 3 V-3" fill="none" stroke="#4A78C8" stroke-width="1.05"/></g></svg><div style="position:absolute;left:488px;top:388px;font-size:11px;line-height:13px;color:#282828;font-weight:400;letter-spacing:-0.28px;white-space:nowrap;">Anthony Roche - EQUIPR</div><div style="position:absolute;left:636px;top:388px;font-size:11px;line-height:13px;color:#282828;font-weight:400;letter-spacing:-0.28px;white-space:nowrap;">Anthony</div><div style="position:absolute;left:735px;top:388px;font-size:11px;line-height:13px;color:#282828;font-weight:400;letter-spacing:-0.28px;white-space:nowrap;">Roche</div><div style="position:absolute;left:834px;top:388px;font-size:11px;line-height:13px;color:#282828;font-weight:400;letter-spacing:-0.28px;white-space:nowrap;">Crew Safe</div><div style="position:absolute;left:933px;top:388px;font-size:11px;line-height:13px;color:#282828;font-weight:400;letter-spacing:-0.28px;white-space:nowrap;">Crew Safe</div><div style="position:absolute;left:1032px;top:388px;font-size:11px;line-height:13px;color:#282828;font-weight:400;letter-spacing:0.01px;white-space:nowrap;">017 35028</div><div style="position:absolute;left:1131px;top:388px;font-size:11px;line-height:13px;color:#282828;font-weight:400;letter-spacing:-0.28px;white-space:nowrap;">Crew Safe Ticket</div><div style="position:absolute;left:1313px;top:388px;font-size:11px;line-height:13px;color:#282828;font-weight:400;letter-spacing:0.16px;white-space:nowrap;">13/10/2022</div><div style="position:absolute;left:1523px;top:388px;font-size:11px;line-height:13px;color:#282828;font-weight:400;letter-spacing:0.16px;white-space:nowrap;">04/10/2022</div><div style="position:absolute;left:1430px;top:387px;width:13px;height:13px;background:#fff;border:1px solid #8C8C8C;box-sizing:border-box"></div><svg style="position:absolute;left:450px;top:405px;" width="11" height="14" viewBox="0 0 11 14"><path d="M5.5 0 L11 2.2 V6.5 C11 9.8 8.3 12.4 5.5 13.5 C2.7 12.4 0 9.8 0 6.5 V2.2 Z" fill="#F8C400"/><rect x="4.8" y="3.5" width="1.5" height="4.5" fill="#6A5010"/><rect x="4.8" y="9" width="1.5" height="1.5" fill="#6A5010"/></svg><svg style="position:absolute;left:467px;top:404px;" width="16" height="16" viewBox="0 0 16 16"><g transform="translate(8 8) rotate(42) translate(0 -0.5)"><path d="M-3.5 -4 V5 A3.5 3.5 0 0 0 3.5 5 V-5 A2.5 2.5 0 0 0 -1.5 -5 V3 A1.5 1.5 0 0 0 1.5 3 V-3" fill="none" stroke="#4A78C8" stroke-width="1.05"/></g></svg><div style="position:absolute;left:488px;top:406px;font-size:11px;line-height:13px;color:#282828;font-weight:400;letter-spacing:-0.28px;white-space:nowrap;">Anthony Roche - EQUIPR</div><div style="position:absolute;left:636px;top:406px;font-size:11px;line-height:13px;color:#282828;font-weight:400;letter-spacing:-0.28px;white-space:nowrap;">Anthony</div><div style="position:absolute;left:735px;top:406px;font-size:11px;line-height:13px;color:#282828;font-weight:400;letter-spacing:-0.28px;white-space:nowrap;">Roche</div><div style="position:absolute;left:834px;top:406px;font-size:11px;line-height:13px;color:#282828;font-weight:400;letter-spacing:-0.28px;white-space:nowrap;">Lend Lease Indu...</div><div style="position:absolute;left:933px;top:406px;font-size:11px;line-height:13px;color:#282828;font-weight:400;letter-spacing:-0.28px;white-space:nowrap;">Lend Lease Indu...</div><div style="position:absolute;left:1032px;top:406px;font-size:11px;line-height:13px;color:#282828;font-weight:400;letter-spacing:-0.28px;white-space:nowrap;">LL Barangaroo</div><div style="position:absolute;left:1131px;top:406px;font-size:11px;line-height:13px;color:#282828;font-weight:400;letter-spacing:-0.28px;white-space:nowrap;">Lend Lease Induction</div><div style="position:absolute;left:1313px;top:406px;font-size:11px;line-height:13px;color:#282828;font-weight:400;letter-spacing:0.16px;white-space:nowrap;">23/02/2021</div><div style="position:absolute;left:1523px;top:406px;font-size:11px;line-height:13px;color:#282828;font-weight:400;letter-spacing:0.16px;white-space:nowrap;">27/08/2022</div><div style="position:absolute;left:1430px;top:405px;width:13px;height:13px;background:#fff;border:1px solid #8C8C8C;box-sizing:border-box"></div><svg style="position:absolute;left:467px;top:422px;" width="16" height="16" viewBox="0 0 16 16"><g transform="translate(8 8) rotate(42) translate(0 -0.5)"><path d="M-3.5 -4 V5 A3.5 3.5 0 0 0 3.5 5 V-5 A2.5 2.5 0 0 0 -1.5 -5 V3 A1.5 1.5 0 0 0 1.5 3 V-3" fill="none" stroke="#4A78C8" stroke-width="1.05"/></g></svg><div style="position:absolute;left:488px;top:424px;font-size:11px;line-height:13px;color:#282828;font-weight:400;letter-spacing:-0.28px;white-space:nowrap;">Brad Pitt</div><div style="position:absolute;left:636px;top:424px;font-size:11px;line-height:13px;color:#282828;font-weight:400;letter-spacing:-0.28px;white-space:nowrap;">Brad</div><div style="position:absolute;left:735px;top:424px;font-size:11px;line-height:13px;color:#282828;font-weight:400;letter-spacing:-0.28px;white-space:nowrap;">Pitt</div><div style="position:absolute;left:834px;top:424px;font-size:11px;line-height:13px;color:#282828;font-weight:400;letter-spacing:-0.28px;white-space:nowrap;">Crew Safe</div><div style="position:absolute;left:933px;top:424px;font-size:11px;line-height:13px;color:#282828;font-weight:400;letter-spacing:-0.28px;white-space:nowrap;">Crew Safe</div><div style="position:absolute;left:1032px;top:424px;font-size:11px;line-height:13px;color:#282828;font-weight:400;letter-spacing:0.01px;white-space:nowrap;">017 35028</div><div style="position:absolute;left:1131px;top:424px;font-size:11px;line-height:13px;color:#282828;font-weight:400;letter-spacing:-0.28px;white-space:nowrap;">Crew Safe</div><div style="position:absolute;left:1313px;top:424px;font-size:11px;line-height:13px;color:#282828;font-weight:400;letter-spacing:0.16px;white-space:nowrap;">23/02/2021</div><div style="position:absolute;left:1523px;top:424px;font-size:11px;line-height:13px;color:#282828;font-weight:400;letter-spacing:0.16px;white-space:nowrap;">15/04/2023</div><div style="position:absolute;left:1430px;top:423px;width:13px;height:13px;background:#fff;border:1px solid #8C8C8C;box-sizing:border-box"></div><svg style="position:absolute;left:429px;top:442px;" width="13" height="11" viewBox="0 0 13 11"><path d="M3 0 H10 L13 5.5 L10 11 H3 L0 5.5 Z" fill="#F0443A"/><rect x="5.8" y="2" width="1.5" height="4.8" fill="#fff"/><rect x="5.8" y="7.8" width="1.5" height="1.5" fill="#fff"/></svg><svg style="position:absolute;left:467px;top:440px;" width="16" height="16" viewBox="0 0 16 16"><g transform="translate(8 8) rotate(42) translate(0 -0.5)"><path d="M-3.5 -4 V5 A3.5 3.5 0 0 0 3.5 5 V-5 A2.5 2.5 0 0 0 -1.5 -5 V3 A1.5 1.5 0 0 0 1.5 3 V-3" fill="none" stroke="#4A78C8" stroke-width="1.05"/></g></svg><div style="position:absolute;left:488px;top:442px;font-size:11px;line-height:13px;color:#282828;font-weight:400;letter-spacing:-0.28px;white-space:nowrap;">Jason Stevens</div><div style="position:absolute;left:636px;top:442px;font-size:11px;line-height:13px;color:#282828;font-weight:400;letter-spacing:-0.28px;white-space:nowrap;">Jason</div><div style="position:absolute;left:735px;top:442px;font-size:11px;line-height:13px;color:#282828;font-weight:400;letter-spacing:-0.28px;white-space:nowrap;">Stevens</div><div style="position:absolute;left:834px;top:442px;font-size:11px;line-height:13px;color:#282828;font-weight:400;letter-spacing:-0.28px;white-space:nowrap;">Lend Lease Indu...</div><div style="position:absolute;left:933px;top:442px;font-size:11px;line-height:13px;color:#282828;font-weight:400;letter-spacing:-0.28px;white-space:nowrap;">Lend Lease Indu...</div><div style="position:absolute;left:1032px;top:442px;font-size:11px;line-height:13px;color:#282828;font-weight:400;letter-spacing:-0.28px;white-space:nowrap;">LL Barangaroo</div><div style="position:absolute;left:1131px;top:442px;font-size:11px;line-height:13px;color:#282828;font-weight:400;letter-spacing:-0.28px;white-space:nowrap;">Lend Lease Induction</div><div style="position:absolute;left:1313px;top:442px;font-size:11px;line-height:13px;color:#282828;font-weight:400;letter-spacing:0.16px;white-space:nowrap;">15/12/2020</div><div style="position:absolute;left:1523px;top:442px;font-size:11px;line-height:13px;color:#282828;font-weight:400;letter-spacing:0.16px;white-space:nowrap;">01/05/2022</div><div style="position:absolute;left:1430px;top:441px;width:13px;height:13px;background:#fff;border:1px solid #8C8C8C;box-sizing:border-box"></div><svg style="position:absolute;left:429px;top:460px;" width="13" height="11" viewBox="0 0 13 11"><path d="M3 0 H10 L13 5.5 L10 11 H3 L0 5.5 Z" fill="#F0443A"/><rect x="5.8" y="2" width="1.5" height="4.8" fill="#fff"/><rect x="5.8" y="7.8" width="1.5" height="1.5" fill="#fff"/></svg><svg style="position:absolute;left:467px;top:458px;" width="16" height="16" viewBox="0 0 16 16"><g transform="translate(8 8) rotate(42) translate(0 -0.5)"><path d="M-3.5 -4 V5 A3.5 3.5 0 0 0 3.5 5 V-5 A2.5 2.5 0 0 0 -1.5 -5 V3 A1.5 1.5 0 0 0 1.5 3 V-3" fill="none" stroke="#4A78C8" stroke-width="1.05"/></g></svg><div style="position:absolute;left:488px;top:460px;font-size:11px;line-height:13px;color:#282828;font-weight:400;letter-spacing:-0.28px;white-space:nowrap;">Glenn Newman</div><div style="position:absolute;left:636px;top:460px;font-size:11px;line-height:13px;color:#282828;font-weight:400;letter-spacing:-0.28px;white-space:nowrap;">Glenn</div><div style="position:absolute;left:735px;top:460px;font-size:11px;line-height:13px;color:#282828;font-weight:400;letter-spacing:-0.28px;white-space:nowrap;">Newman</div><div style="position:absolute;left:834px;top:460px;font-size:11px;line-height:13px;color:#282828;font-weight:400;letter-spacing:-0.28px;white-space:nowrap;">Verification of Co...</div><div style="position:absolute;left:933px;top:460px;font-size:11px;line-height:13px;color:#282828;font-weight:400;letter-spacing:-0.28px;white-space:nowrap;">VOC - GN</div><div style="position:absolute;left:1032px;top:460px;font-size:11px;line-height:13px;color:#282828;font-weight:400;letter-spacing:0.01px;white-space:nowrap;">320 45821</div><div style="position:absolute;left:1131px;top:460px;font-size:11px;line-height:13px;color:#282828;font-weight:400;letter-spacing:-0.28px;white-space:nowrap;">VOC - GN</div><div style="position:absolute;left:1313px;top:460px;font-size:11px;line-height:13px;color:#282828;font-weight:400;letter-spacing:0.16px;white-space:nowrap;">23/02/2021</div><div style="position:absolute;left:1523px;top:460px;font-size:11px;line-height:13px;color:#282828;font-weight:400;letter-spacing:0.16px;white-space:nowrap;">04/02/2022</div><div style="position:absolute;left:1430px;top:459px;width:13px;height:13px;background:#fff;border:1px solid #8C8C8C;box-sizing:border-box"></div><svg style="position:absolute;left:467px;top:476px;" width="16" height="16" viewBox="0 0 16 16"><g transform="translate(8 8) rotate(42) translate(0 -0.5)"><path d="M-3.5 -4 V5 A3.5 3.5 0 0 0 3.5 5 V-5 A2.5 2.5 0 0 0 -1.5 -5 V3 A1.5 1.5 0 0 0 1.5 3 V-3" fill="none" stroke="#4A78C8" stroke-width="1.05"/></g></svg><div style="position:absolute;left:488px;top:478px;font-size:11px;line-height:13px;color:#282828;font-weight:400;letter-spacing:-0.28px;white-space:nowrap;">Chris Roche</div><div style="position:absolute;left:636px;top:478px;font-size:11px;line-height:13px;color:#282828;font-weight:400;letter-spacing:-0.28px;white-space:nowrap;">Chris</div><div style="position:absolute;left:735px;top:478px;font-size:11px;line-height:13px;color:#282828;font-weight:400;letter-spacing:-0.28px;white-space:nowrap;">Roche</div><div style="position:absolute;left:834px;top:478px;font-size:11px;line-height:13px;color:#282828;font-weight:400;letter-spacing:-0.28px;white-space:nowrap;">Crew Safe</div><div style="position:absolute;left:933px;top:478px;font-size:11px;line-height:13px;color:#282828;font-weight:400;letter-spacing:-0.28px;white-space:nowrap;">Crew Safe</div><div style="position:absolute;left:1032px;top:478px;font-size:11px;line-height:13px;color:#282828;font-weight:400;letter-spacing:0.01px;white-space:nowrap;">017 35028</div><div style="position:absolute;left:1131px;top:478px;font-size:11px;line-height:13px;color:#282828;font-weight:400;letter-spacing:-0.28px;white-space:nowrap;">Crew Safe</div><div style="position:absolute;left:1313px;top:478px;font-size:11px;line-height:13px;color:#282828;font-weight:400;letter-spacing:0.16px;white-space:nowrap;">23/01/2021</div><div style="position:absolute;left:1523px;top:478px;font-size:11px;line-height:13px;color:#282828;font-weight:400;letter-spacing:0.16px;white-space:nowrap;">23/09/2022</div><div style="position:absolute;left:1430px;top:477px;width:13px;height:13px;background:#fff;border:1px solid #8C8C8C;box-sizing:border-box"></div><svg style="position:absolute;left:450px;top:495px;" width="11" height="14" viewBox="0 0 11 14"><path d="M5.5 0 L11 2.2 V6.5 C11 9.8 8.3 12.4 5.5 13.5 C2.7 12.4 0 9.8 0 6.5 V2.2 Z" fill="#F8C400"/><rect x="4.8" y="3.5" width="1.5" height="4.5" fill="#6A5010"/><rect x="4.8" y="9" width="1.5" height="1.5" fill="#6A5010"/></svg><svg style="position:absolute;left:467px;top:494px;" width="16" height="16" viewBox="0 0 16 16"><g transform="translate(8 8) rotate(42) translate(0 -0.5)"><path d="M-3.5 -4 V5 A3.5 3.5 0 0 0 3.5 5 V-5 A2.5 2.5 0 0 0 -1.5 -5 V3 A1.5 1.5 0 0 0 1.5 3 V-3" fill="none" stroke="#4A78C8" stroke-width="1.05"/></g></svg><div style="position:absolute;left:488px;top:496px;font-size:11px;line-height:13px;color:#282828;font-weight:400;letter-spacing:-0.28px;white-space:nowrap;">Brad Pitt</div><div style="position:absolute;left:636px;top:496px;font-size:11px;line-height:13px;color:#282828;font-weight:400;letter-spacing:-0.28px;white-space:nowrap;">Brad</div><div style="position:absolute;left:735px;top:496px;font-size:11px;line-height:13px;color:#282828;font-weight:400;letter-spacing:-0.28px;white-space:nowrap;">Pitt</div><div style="position:absolute;left:834px;top:496px;font-size:11px;line-height:13px;color:#282828;font-weight:400;letter-spacing:-0.28px;white-space:nowrap;">Lend Lease Indu...</div><div style="position:absolute;left:933px;top:496px;font-size:11px;line-height:13px;color:#282828;font-weight:400;letter-spacing:-0.28px;white-space:nowrap;">Lend Lease Indu...</div><div style="position:absolute;left:1032px;top:496px;font-size:11px;line-height:13px;color:#282828;font-weight:400;letter-spacing:-0.28px;white-space:nowrap;">LL Barangaroo</div><div style="position:absolute;left:1131px;top:496px;font-size:11px;line-height:13px;color:#282828;font-weight:400;letter-spacing:-0.28px;white-space:nowrap;">Lend Lease Induction</div><div style="position:absolute;left:1313px;top:496px;font-size:11px;line-height:13px;color:#282828;font-weight:400;letter-spacing:0.18px;white-space:nowrap;">8/02/2021</div><div style="position:absolute;left:1523px;top:496px;font-size:11px;line-height:13px;color:#282828;font-weight:400;letter-spacing:0.16px;white-space:nowrap;">08/09/2022</div><div style="position:absolute;left:1430px;top:495px;width:13px;height:13px;background:#fff;border:1px solid #8C8C8C;box-sizing:border-box"></div><svg style="position:absolute;left:467px;top:512px;" width="16" height="16" viewBox="0 0 16 16"><g transform="translate(8 8) rotate(42) translate(0 -0.5)"><path d="M-3.5 -4 V5 A3.5 3.5 0 0 0 3.5 5 V-5 A2.5 2.5 0 0 0 -1.5 -5 V3 A1.5 1.5 0 0 0 1.5 3 V-3" fill="none" stroke="#4A78C8" stroke-width="1.05"/></g></svg><div style="position:absolute;left:488px;top:514px;font-size:11px;line-height:13px;color:#282828;font-weight:400;letter-spacing:-0.28px;white-space:nowrap;">George Clooney</div><div style="position:absolute;left:636px;top:514px;font-size:11px;line-height:13px;color:#282828;font-weight:400;letter-spacing:-0.28px;white-space:nowrap;">George</div><div style="position:absolute;left:735px;top:514px;font-size:11px;line-height:13px;color:#282828;font-weight:400;letter-spacing:-0.28px;white-space:nowrap;">Clooney</div><div style="position:absolute;left:834px;top:514px;font-size:11px;line-height:13px;color:#282828;font-weight:400;letter-spacing:-0.28px;white-space:nowrap;">Verification of Co...</div><div style="position:absolute;left:933px;top:514px;font-size:11px;line-height:13px;color:#282828;font-weight:400;letter-spacing:-0.28px;white-space:nowrap;">VOC - GC</div><div style="position:absolute;left:1032px;top:514px;font-size:11px;line-height:13px;color:#282828;font-weight:400;letter-spacing:0.01px;white-space:nowrap;">320 45821</div><div style="position:absolute;left:1131px;top:514px;font-size:11px;line-height:13px;color:#282828;font-weight:400;letter-spacing:-0.28px;white-space:nowrap;">VOC - GC</div><div style="position:absolute;left:1313px;top:514px;font-size:11px;line-height:13px;color:#282828;font-weight:400;letter-spacing:0.18px;white-space:nowrap;">8/02/2021</div><div style="position:absolute;left:1523px;top:514px;font-size:11px;line-height:13px;color:#282828;font-weight:400;letter-spacing:0.16px;white-space:nowrap;">26/02/2024</div><div style="position:absolute;left:1430px;top:513px;width:13px;height:13px;background:#fff;border:1px solid #8C8C8C;box-sizing:border-box"></div><svg style="position:absolute;left:467px;top:530px;" width="16" height="16" viewBox="0 0 16 16"><g transform="translate(8 8) rotate(42) translate(0 -0.5)"><path d="M-3.5 -4 V5 A3.5 3.5 0 0 0 3.5 5 V-5 A2.5 2.5 0 0 0 -1.5 -5 V3 A1.5 1.5 0 0 0 1.5 3 V-3" fill="none" stroke="#4A78C8" stroke-width="1.05"/></g></svg><div style="position:absolute;left:488px;top:532px;font-size:11px;line-height:13px;color:#282828;font-weight:400;letter-spacing:-0.28px;white-space:nowrap;">Harry Windsor</div><div style="position:absolute;left:636px;top:532px;font-size:11px;line-height:13px;color:#282828;font-weight:400;letter-spacing:-0.28px;white-space:nowrap;">Harry</div><div style="position:absolute;left:735px;top:532px;font-size:11px;line-height:13px;color:#282828;font-weight:400;letter-spacing:-0.28px;white-space:nowrap;">Windsor</div><div style="position:absolute;left:834px;top:532px;font-size:11px;line-height:13px;color:#282828;font-weight:400;letter-spacing:-0.28px;white-space:nowrap;">Crew Safe</div><div style="position:absolute;left:933px;top:532px;font-size:11px;line-height:13px;color:#282828;font-weight:400;letter-spacing:-0.28px;white-space:nowrap;">LE - Excavator Ti...</div><div style="position:absolute;left:1032px;top:532px;font-size:11px;line-height:13px;color:#282828;font-weight:400;letter-spacing:0.01px;white-space:nowrap;">017 35028</div><div style="position:absolute;left:1131px;top:532px;font-size:11px;line-height:13px;color:#282828;font-weight:400;letter-spacing:-0.28px;white-space:nowrap;">LE - Excavator Ticket</div><div style="position:absolute;left:1313px;top:532px;font-size:11px;line-height:13px;color:#282828;font-weight:400;letter-spacing:0.16px;white-space:nowrap;">23/02/2021</div><div style="position:absolute;left:1523px;top:532px;font-size:11px;line-height:13px;color:#282828;font-weight:400;letter-spacing:0.16px;white-space:nowrap;">04/05/2024</div><div style="position:absolute;left:1430px;top:531px;width:13px;height:13px;background:#fff;border:1px solid #8C8C8C;box-sizing:border-box"></div><div style="position:absolute;left:1667px;top:385px;width:17px;height:165px;background:#EAEAEA"></div><div style="position:absolute;left:1667px;top:402px;width:17px;height:58px;background:#C8C8C8"></div><svg style="position:absolute;left:1671px;top:390px;" width="9" height="5" viewBox="0 0 9 5"><path d="M0.8 4.5 L4.5 0.8 L8.2 4.5" fill="none" stroke="#606060" stroke-width="1.4"/></svg><svg style="position:absolute;left:1671px;top:539px;" width="9" height="5" viewBox="0 0 9 5"><path d="M0.8 0.5 L4.5 4.2 L8.2 0.5" fill="none" stroke="#606060" stroke-width="1.4"/></svg><div style="position:absolute;left:424px;top:547px;width:1243px;height:3px;overflow:hidden"><svg style="position:absolute;left:43px;top:1px" width="16" height="16" viewBox="0 0 16 16"><g transform="translate(8 8) rotate(42) translate(0 -0.5)"><path d="M-3.5 -4 V5 A3.5 3.5 0 0 0 3.5 5 V-5 A2.5 2.5 0 0 0 -1.5 -5 V3 A1.5 1.5 0 0 0 1.5 3 V-3" fill="none" stroke="#4A78C8" stroke-width="1.05"/></g></svg><div style="position:absolute;left:1006px;top:2px;width:13px;height:5px;border:1px solid #8C8C8C;box-sizing:border-box;background:#fff"></div></div><div style="position:absolute;left:1045px;top:561px;width:2px;height:2px;background:#505050"></div><div style="position:absolute;left:1049px;top:561px;width:2px;height:2px;background:#505050"></div><div style="position:absolute;left:1053px;top:561px;width:2px;height:2px;background:#505050"></div><div style="position:absolute;left:1057px;top:561px;width:2px;height:2px;background:#505050"></div><div style="position:absolute;left:1061px;top:561px;width:2px;height:2px;background:#505050"></div><div style="position:absolute;left:1045px;top:774px;width:2px;height:2px;background:#505050"></div><div style="position:absolute;left:1049px;top:774px;width:2px;height:2px;background:#505050"></div><div style="position:absolute;left:1053px;top:774px;width:2px;height:2px;background:#505050"></div><div style="position:absolute;left:1057px;top:774px;width:2px;height:2px;background:#505050"></div><div style="position:absolute;left:1061px;top:774px;width:2px;height:2px;background:#505050"></div><div style="position:absolute;left:421px;top:581px;width:1267px;height:186px;border:1px solid #C4C4C4;box-sizing:border-box"></div><div style="position:absolute;left:429px;top:572px;height:16px;background:#F0F0F0;padding:0 4px;font-size:11.6px;line-height:16px;font-weight:700;color:#202020;white-space:nowrap;letter-spacing:0px">Asset Portfolio</div><svg style="position:absolute;left:431px;top:603px;" width="16" height="16" viewBox="0 0 16 16"><path d="M1.6 7.6 A6.4 6.4 0 0 1 12.8 3.9" fill="none" stroke="#3D72C8" stroke-width="3.2"/><path d="M1.6 7.6 A6.4 6.4 0 0 1 12.8 3.9" fill="none" stroke="#8AB4F0" stroke-width="1.4"/><path d="M15.6 0.8 V7.3 H9.3 Z" fill="#8AB4F0" stroke="#3D72C8" stroke-width="0.9" stroke-linejoin="miter"/><g transform="rotate(180 8 8)"><path d="M1.6 7.6 A6.4 6.4 0 0 1 12.8 3.9" fill="none" stroke="#3D72C8" stroke-width="3.2"/><path d="M1.6 7.6 A6.4 6.4 0 0 1 12.8 3.9" fill="none" stroke="#8AB4F0" stroke-width="1.4"/><path d="M15.6 0.8 V7.3 H9.3 Z" fill="#8AB4F0" stroke="#3D72C8" stroke-width="0.9" stroke-linejoin="miter"/></g></svg><div style="position:absolute;left:455px;top:600px;width:1px;height:22px;background:#C8C8C8"></div><svg style="position:absolute;left:464px;top:603px;" width="15" height="15" viewBox="0 0 15 15"><path d="M6.5 0.5 H8.5 V6.5 H14.5 V8.5 H8.5 V14.5 H6.5 V8.5 H0.5 V6.5 H6.5 Z" fill="#8AB4F0" stroke="#3D72C8" stroke-width="1"/></svg><svg style="position:absolute;left:490px;top:603px;" width="16" height="16" viewBox="0 0 16 16"><path d="M3.5 10.5 L11 3 L13 5 L5.5 12.5 Z" fill="#F2D670" stroke="#C9A540" stroke-width="0.8"/>
<path d="M11 3 L12.5 1.5 A1.2 1.2 0 0 1 14.5 3.5 L13 5 Z" fill="#E86060"/>
<path d="M10.6 3.4 L12 2 L14 4 L12.6 5.4 Z" fill="#C8D8E8"/>
<path d="M3.5 10.5 L5.5 12.5 L1.5 14.5 Z" fill="#F5E3B0"/>
<path d="M2.3 12.3 L3.7 13.7 L1.2 14.8 Z" fill="#303030"/></svg><svg style="position:absolute;left:517px;top:604px;" width="13" height="13" viewBox="0 0 13 13"><path d="M1.8 1.8 L11.2 11.2 M11.2 1.8 L1.8 11.2" stroke="#F08080" stroke-width="2.8" stroke-linecap="square"/></svg><svg style="position:absolute;left:1558px;top:603px;" width="17" height="16" viewBox="0 0 17 16"><path d="M0.5 0.5 H16.5 V1.8 L10.5 7.5 V13 L7.5 15.5 V7.5 L0.5 1.8 Z" fill="#DCD0F0" stroke="#9C7CC0" stroke-width="1" stroke-linejoin="round"/></svg><div style="position:absolute;left:1579px;top:601px;width:100px;height:20px;background:#fff;border:1px solid #A8A8A8;box-sizing:border-box"></div><div style="position:absolute;left:1662px;top:601px;width:1px;height:20px;background:#A8A8A8"></div><div style="position:absolute;left:1663px;top:602px;width:15px;height:18px;background:#F0F0F0"></div><svg style="position:absolute;left:1667px;top:609px;" width="7" height="4" viewBox="0 0 7 4"><path d="M0 0 H7 L3.5 4 Z" fill="#505050"/></svg><div style="position:absolute;left:1584px;top:605px;font-size:11px;line-height:13px;color:#282828;font-weight:400;letter-spacing:-0.2px;white-space:nowrap;">Active</div><div style="position:absolute;left:424px;top:629px;width:1261px;height:135px;background:#fff;border:1px solid #A0A0A0;box-sizing:border-box"></div><div style="position:absolute;left:425px;top:630px;width:1259px;height:19px;background:#F0F0F0"></div><div style="position:absolute;left:425px;top:649px;width:1259px;height:1px;background:#A0A0A0"></div><div style="position:absolute;left:444px;top:630px;width:1px;height:19px;background:#A0A0A0"></div><div style="position:absolute;left:464px;top:630px;width:1px;height:19px;background:#A0A0A0"></div><div style="position:absolute;left:484px;top:630px;width:1px;height:19px;background:#A0A0A0"></div><div style="position:absolute;left:615px;top:630px;width:1px;height:19px;background:#A0A0A0"></div><div style="position:absolute;left:729px;top:630px;width:1px;height:19px;background:#A0A0A0"></div><div style="position:absolute;left:843px;top:630px;width:1px;height:19px;background:#A0A0A0"></div><div style="position:absolute;left:957px;top:630px;width:1px;height:19px;background:#A0A0A0"></div><div style="position:absolute;left:1071px;top:630px;width:1px;height:19px;background:#A0A0A0"></div><div style="position:absolute;left:1276px;top:630px;width:1px;height:19px;background:#A0A0A0"></div><div style="position:absolute;left:1380px;top:630px;width:1px;height:19px;background:#A0A0A0"></div><div style="position:absolute;left:1463px;top:630px;width:1px;height:19px;background:#A0A0A0"></div><div style="position:absolute;left:1519px;top:630px;width:1px;height:19px;background:#A0A0A0"></div><div style="position:absolute;left:488px;top:633px;font-size:11px;line-height:13px;color:#282828;font-weight:400;letter-spacing:-0.22px;white-space:nowrap;">Asset</div><div style="position:absolute;left:619px;top:633px;font-size:11px;line-height:13px;color:#282828;font-weight:400;letter-spacing:-0.22px;white-space:nowrap;">Asset#</div><div style="position:absolute;left:733px;top:633px;font-size:11px;line-height:13px;color:#282828;font-weight:400;letter-spacing:-0.22px;white-space:nowrap;">Type</div><div style="position:absolute;left:847px;top:633px;font-size:11px;line-height:13px;color:#282828;font-weight:400;letter-spacing:-0.22px;white-space:nowrap;">Name</div><div style="position:absolute;left:961px;top:633px;font-size:11px;line-height:13px;color:#282828;font-weight:400;letter-spacing:-0.22px;white-space:nowrap;">Identifier</div><div style="position:absolute;left:1075px;top:633px;font-size:11px;line-height:13px;color:#282828;font-weight:400;letter-spacing:-0.22px;white-space:nowrap;">Description</div><div style="position:absolute;left:1280px;top:633px;font-size:11px;line-height:13px;color:#282828;font-weight:400;letter-spacing:-0.22px;white-space:nowrap;">Obtained</div><div style="position:absolute;left:1384px;top:633px;font-size:11px;line-height:13px;color:#282828;font-weight:400;letter-spacing:-0.22px;white-space:nowrap;">Private</div><div style="position:absolute;left:1467px;top:633px;font-size:11px;line-height:13px;color:#282828;font-weight:400;letter-spacing:-0.22px;white-space:nowrap;">Public</div><div style="position:absolute;left:1523px;top:633px;font-size:11px;line-height:13px;color:#282828;font-weight:400;letter-spacing:-0.22px;white-space:nowrap;">Expiry Date</div><div style="position:absolute;left:425px;top:650px;width:1259px;height:18px;background:#E5F1FB"></div><svg style="position:absolute;left:429px;top:653px;" width="13" height="11" viewBox="0 0 13 11"><path d="M3 0 H10 L13 5.5 L10 11 H3 L0 5.5 Z" fill="#F0443A"/><rect x="5.8" y="2" width="1.5" height="4.8" fill="#fff"/><rect x="5.8" y="7.8" width="1.5" height="1.5" fill="#fff"/></svg><div style="position:absolute;left:488px;top:653px;font-size:11px;line-height:13px;color:#282828;font-weight:400;letter-spacing:-0.23px;white-space:nowrap;">50T City Crane</div><div style="position:absolute;left:619px;top:653px;font-size:11px;line-height:13px;color:#282828;font-weight:400;letter-spacing:-0.12px;white-space:nowrap;">T28C</div><div style="position:absolute;left:733px;top:653px;font-size:11px;line-height:13px;color:#282828;font-weight:400;letter-spacing:-0.28px;white-space:nowrap;">Plant Risk Assessme...</div><div style="position:absolute;left:847px;top:653px;font-size:11px;line-height:13px;color:#282828;font-weight:400;letter-spacing:-0.21px;white-space:nowrap;">PRA - T28C</div><div style="position:absolute;left:961px;top:653px;font-size:11px;line-height:13px;color:#282828;font-weight:400;letter-spacing:-0.21px;white-space:nowrap;">PRA - T28C</div><div style="position:absolute;left:1280px;top:653px;font-size:11px;line-height:13px;color:#282828;font-weight:400;letter-spacing:0.16px;white-space:nowrap;">10/05/2021</div><div style="position:absolute;left:1523px;top:653px;font-size:11px;line-height:13px;color:#282828;font-weight:400;letter-spacing:0.16px;white-space:nowrap;">08/11/2021</div><div style="position:absolute;left:1416px;top:652px;width:13px;height:13px;background:#fff;border:1px solid #8C8C8C;box-sizing:border-box"></div><div style="position:absolute;left:488px;top:671px;font-size:11px;line-height:13px;color:#282828;font-weight:400;letter-spacing:-0.23px;white-space:nowrap;">10T City Crane</div><div style="position:absolute;left:619px;top:671px;font-size:11px;line-height:13px;color:#282828;font-weight:400;letter-spacing:-0.12px;white-space:nowrap;">B14C</div><div style="position:absolute;left:733px;top:671px;font-size:11px;line-height:13px;color:#282828;font-weight:400;letter-spacing:-0.28px;white-space:nowrap;">Plant Risk Assessme...</div><div style="position:absolute;left:847px;top:671px;font-size:11px;line-height:13px;color:#282828;font-weight:400;letter-spacing:-0.21px;white-space:nowrap;">PRA - B14C</div><div style="position:absolute;left:961px;top:671px;font-size:11px;line-height:13px;color:#282828;font-weight:400;letter-spacing:-0.21px;white-space:nowrap;">PRA - B14C</div><div style="position:absolute;left:1075px;top:671px;font-size:11px;line-height:13px;color:#282828;font-weight:400;letter-spacing:-0.28px;white-space:nowrap;">Plant Risk Assessment</div><div style="position:absolute;left:1280px;top:671px;font-size:11px;line-height:13px;color:#282828;font-weight:400;letter-spacing:0.16px;white-space:nowrap;">11/10/2021</div><div style="position:absolute;left:1416px;top:670px;width:13px;height:13px;background:#fff;border:1px solid #8C8C8C;box-sizing:border-box"></div><svg style="position:absolute;left:450px;top:688px;" width="11" height="14" viewBox="0 0 11 14"><path d="M5.5 0 L11 2.2 V6.5 C11 9.8 8.3 12.4 5.5 13.5 C2.7 12.4 0 9.8 0 6.5 V2.2 Z" fill="#F8C400"/><rect x="4.8" y="3.5" width="1.5" height="4.5" fill="#6A5010"/><rect x="4.8" y="9" width="1.5" height="1.5" fill="#6A5010"/></svg><svg style="position:absolute;left:467px;top:687px;" width="16" height="16" viewBox="0 0 16 16"><g transform="translate(8 8) rotate(42) translate(0 -0.5)"><path d="M-3.5 -4 V5 A3.5 3.5 0 0 0 3.5 5 V-5 A2.5 2.5 0 0 0 -1.5 -5 V3 A1.5 1.5 0 0 0 1.5 3 V-3" fill="none" stroke="#4A78C8" stroke-width="1.05"/></g></svg><div style="position:absolute;left:488px;top:689px;font-size:11px;line-height:13px;color:#282828;font-weight:400;letter-spacing:-0.21px;white-space:nowrap;">20T Franna</div><div style="position:absolute;left:619px;top:689px;font-size:11px;line-height:13px;color:#282828;font-weight:400;letter-spacing:-0.12px;white-space:nowrap;">20TF-1</div><div style="position:absolute;left:733px;top:689px;font-size:11px;line-height:13px;color:#282828;font-weight:400;letter-spacing:-0.28px;white-space:nowrap;">Plant Risk Assessme...</div><div style="position:absolute;left:847px;top:689px;font-size:11px;line-height:13px;color:#282828;font-weight:400;letter-spacing:-0.2px;white-space:nowrap;">PRA - 20TF-1</div><div style="position:absolute;left:961px;top:689px;font-size:11px;line-height:13px;color:#282828;font-weight:400;letter-spacing:-0.07px;white-space:nowrap;">PRA-1123455</div><div style="position:absolute;left:1075px;top:689px;font-size:11px;line-height:13px;color:#282828;font-weight:400;letter-spacing:-0.18px;white-space:nowrap;">20TF-1 PRA</div><div style="position:absolute;left:1280px;top:689px;font-size:11px;line-height:13px;color:#282828;font-weight:400;letter-spacing:0.16px;white-space:nowrap;">11/01/2022</div><div style="position:absolute;left:1523px;top:689px;font-size:11px;line-height:13px;color:#282828;font-weight:400;letter-spacing:0.16px;white-space:nowrap;">25/08/2022</div><div style="position:absolute;left:1416px;top:688px;width:13px;height:13px;background:#fff;border:1px solid #8C8C8C;box-sizing:border-box"></div><svg style="position:absolute;left:467px;top:705px;" width="16" height="16" viewBox="0 0 16 16"><g transform="translate(8 8) rotate(42) translate(0 -0.5)"><path d="M-3.5 -4 V5 A3.5 3.5 0 0 0 3.5 5 V-5 A2.5 2.5 0 0 0 -1.5 -5 V3 A1.5 1.5 0 0 0 1.5 3 V-3" fill="none" stroke="#4A78C8" stroke-width="1.05"/></g></svg><div style="position:absolute;left:488px;top:707px;font-size:11px;line-height:13px;color:#282828;font-weight:400;letter-spacing:-0.24px;white-space:nowrap;">130T All Terrain Crane</div><div style="position:absolute;left:619px;top:707px;font-size:11px;line-height:13px;color:#282828;font-weight:400;letter-spacing:-0.08px;white-space:nowrap;">E130C</div><div style="position:absolute;left:733px;top:707px;font-size:11px;line-height:13px;color:#282828;font-weight:400;letter-spacing:-0.28px;white-space:nowrap;">Plant Risk Assessme...</div><div style="position:absolute;left:847px;top:707px;font-size:11px;line-height:13px;color:#282828;font-weight:400;letter-spacing:-0.19px;white-space:nowrap;">PRA - E130C</div><div style="position:absolute;left:961px;top:707px;font-size:11px;line-height:13px;color:#282828;font-weight:400;letter-spacing:-0.06px;white-space:nowrap;">PRA233242</div><div style="position:absolute;left:1075px;top:707px;font-size:11px;line-height:13px;color:#282828;font-weight:400;letter-spacing:-0.19px;white-space:nowrap;">PRA - E130C</div><div style="position:absolute;left:1280px;top:707px;font-size:11px;line-height:13px;color:#282828;font-weight:400;letter-spacing:0.16px;white-space:nowrap;">21/06/2022</div><div style="position:absolute;left:1523px;top:707px;font-size:11px;line-height:13px;color:#282828;font-weight:400;letter-spacing:0.16px;white-space:nowrap;">27/01/2023</div><div style="position:absolute;left:1416px;top:706px;width:13px;height:13px;background:#fff;border:1px solid #8C8C8C;box-sizing:border-box"></div><div style="position:absolute;left:421px;top:794px;width:1267px;height:186px;border:1px solid #C4C4C4;box-sizing:border-box"></div><div style="position:absolute;left:429px;top:785px;height:16px;background:#F0F0F0;padding:0 4px;font-size:11.6px;line-height:16px;font-weight:700;color:#202020;white-space:nowrap;letter-spacing:0px">Supplier Portfolio</div><svg style="position:absolute;left:431px;top:816px;" width="16" height="16" viewBox="0 0 16 16"><path d="M1.6 7.6 A6.4 6.4 0 0 1 12.8 3.9" fill="none" stroke="#3D72C8" stroke-width="3.2"/><path d="M1.6 7.6 A6.4 6.4 0 0 1 12.8 3.9" fill="none" stroke="#8AB4F0" stroke-width="1.4"/><path d="M15.6 0.8 V7.3 H9.3 Z" fill="#8AB4F0" stroke="#3D72C8" stroke-width="0.9" stroke-linejoin="miter"/><g transform="rotate(180 8 8)"><path d="M1.6 7.6 A6.4 6.4 0 0 1 12.8 3.9" fill="none" stroke="#3D72C8" stroke-width="3.2"/><path d="M1.6 7.6 A6.4 6.4 0 0 1 12.8 3.9" fill="none" stroke="#8AB4F0" stroke-width="1.4"/><path d="M15.6 0.8 V7.3 H9.3 Z" fill="#8AB4F0" stroke="#3D72C8" stroke-width="0.9" stroke-linejoin="miter"/></g></svg><div style="position:absolute;left:455px;top:813px;width:1px;height:22px;background:#C8C8C8"></div><svg style="position:absolute;left:464px;top:816px;" width="15" height="15" viewBox="0 0 15 15"><path d="M6.5 0.5 H8.5 V6.5 H14.5 V8.5 H8.5 V14.5 H6.5 V8.5 H0.5 V6.5 H6.5 Z" fill="#8AB4F0" stroke="#3D72C8" stroke-width="1"/></svg><svg style="position:absolute;left:490px;top:816px;" width="16" height="16" viewBox="0 0 16 16"><path d="M3.5 10.5 L11 3 L13 5 L5.5 12.5 Z" fill="#F2D670" stroke="#C9A540" stroke-width="0.8"/>
<path d="M11 3 L12.5 1.5 A1.2 1.2 0 0 1 14.5 3.5 L13 5 Z" fill="#E86060"/>
<path d="M10.6 3.4 L12 2 L14 4 L12.6 5.4 Z" fill="#C8D8E8"/>
<path d="M3.5 10.5 L5.5 12.5 L1.5 14.5 Z" fill="#F5E3B0"/>
<path d="M2.3 12.3 L3.7 13.7 L1.2 14.8 Z" fill="#303030"/></svg><svg style="position:absolute;left:517px;top:817px;" width="13" height="13" viewBox="0 0 13 13"><path d="M1.8 1.8 L11.2 11.2 M11.2 1.8 L1.8 11.2" stroke="#F08080" stroke-width="2.8" stroke-linecap="square"/></svg><svg style="position:absolute;left:1558px;top:816px;" width="17" height="16" viewBox="0 0 17 16"><path d="M0.5 0.5 H16.5 V1.8 L10.5 7.5 V13 L7.5 15.5 V7.5 L0.5 1.8 Z" fill="#DCD0F0" stroke="#9C7CC0" stroke-width="1" stroke-linejoin="round"/></svg><div style="position:absolute;left:1579px;top:814px;width:100px;height:20px;background:#fff;border:1px solid #A8A8A8;box-sizing:border-box"></div><div style="position:absolute;left:1662px;top:814px;width:1px;height:20px;background:#A8A8A8"></div><div style="position:absolute;left:1663px;top:815px;width:15px;height:18px;background:#F0F0F0"></div><svg style="position:absolute;left:1667px;top:822px;" width="7" height="4" viewBox="0 0 7 4"><path d="M0 0 H7 L3.5 4 Z" fill="#505050"/></svg><div style="position:absolute;left:1584px;top:818px;font-size:11px;line-height:13px;color:#282828;font-weight:400;letter-spacing:-0.2px;white-space:nowrap;">Active</div><div style="position:absolute;left:424px;top:842px;width:1261px;height:135px;background:#fff;border:1px solid #A0A0A0;box-sizing:border-box"></div><div style="position:absolute;left:425px;top:843px;width:1259px;height:19px;background:#F0F0F0"></div><div style="position:absolute;left:425px;top:862px;width:1259px;height:1px;background:#A0A0A0"></div><div style="position:absolute;left:444px;top:843px;width:1px;height:19px;background:#A0A0A0"></div><div style="position:absolute;left:464px;top:843px;width:1px;height:19px;background:#A0A0A0"></div><div style="position:absolute;left:484px;top:843px;width:1px;height:19px;background:#A0A0A0"></div><div style="position:absolute;left:633px;top:843px;width:1px;height:19px;background:#A0A0A0"></div><div style="position:absolute;left:782px;top:843px;width:1px;height:19px;background:#A0A0A0"></div><div style="position:absolute;left:931px;top:843px;width:1px;height:19px;background:#A0A0A0"></div><div style="position:absolute;left:1235px;top:843px;width:1px;height:19px;background:#A0A0A0"></div><div style="position:absolute;left:1348px;top:843px;width:1px;height:19px;background:#A0A0A0"></div><div style="position:absolute;left:1432px;top:843px;width:1px;height:19px;background:#A0A0A0"></div><div style="position:absolute;left:1488px;top:843px;width:1px;height:19px;background:#A0A0A0"></div><div style="position:absolute;left:488px;top:846px;font-size:11px;line-height:13px;color:#282828;font-weight:400;letter-spacing:-0.22px;white-space:nowrap;">Type</div><div style="position:absolute;left:637px;top:846px;font-size:11px;line-height:13px;color:#282828;font-weight:400;letter-spacing:-0.22px;white-space:nowrap;">Name</div><div style="position:absolute;left:786px;top:846px;font-size:11px;line-height:13px;color:#282828;font-weight:400;letter-spacing:-0.22px;white-space:nowrap;">Identifier</div><div style="position:absolute;left:935px;top:846px;font-size:11px;line-height:13px;color:#282828;font-weight:400;letter-spacing:-0.22px;white-space:nowrap;">Description</div><div style="position:absolute;left:1239px;top:846px;font-size:11px;line-height:13px;color:#282828;font-weight:400;letter-spacing:-0.22px;white-space:nowrap;">Obtained</div><div style="position:absolute;left:1352px;top:846px;font-size:11px;line-height:13px;color:#282828;font-weight:400;letter-spacing:-0.22px;white-space:nowrap;">Private</div><div style="position:absolute;left:1436px;top:846px;font-size:11px;line-height:13px;color:#282828;font-weight:400;letter-spacing:-0.22px;white-space:nowrap;">Public</div><div style="position:absolute;left:1492px;top:846px;font-size:11px;line-height:13px;color:#282828;font-weight:400;letter-spacing:-0.22px;white-space:nowrap;">Expiry Date</div><div style="position:absolute;left:425px;top:863px;width:1259px;height:18px;background:#E5F1FB"></div><svg style="position:absolute;left:467px;top:864px;" width="16" height="16" viewBox="0 0 16 16"><g transform="translate(8 8) rotate(42) translate(0 -0.5)"><path d="M-3.5 -4 V5 A3.5 3.5 0 0 0 3.5 5 V-5 A2.5 2.5 0 0 0 -1.5 -5 V3 A1.5 1.5 0 0 0 1.5 3 V-3" fill="none" stroke="#4A78C8" stroke-width="1.05"/></g></svg><div style="position:absolute;left:488px;top:866px;font-size:11px;line-height:13px;color:#282828;font-weight:400;letter-spacing:-0.28px;white-space:nowrap;">Work Cover Insurance</div><div style="position:absolute;left:637px;top:866px;font-size:11px;line-height:13px;color:#282828;font-weight:400;letter-spacing:-0.28px;white-space:nowrap;">WCI</div><div style="position:absolute;left:786px;top:866px;font-size:11px;line-height:13px;color:#282828;font-weight:400;letter-spacing:-0.08px;white-space:nowrap;">WCI - 938939022</div><div style="position:absolute;left:935px;top:866px;font-size:11px;line-height:13px;color:#282828;font-weight:400;letter-spacing:-0.28px;white-space:nowrap;">WCI - whole of company insurance</div><div style="position:absolute;left:1239px;top:866px;font-size:11px;line-height:13px;color:#282828;font-weight:400;letter-spacing:0.16px;white-space:nowrap;">13/04/2021</div><div style="position:absolute;left:1385px;top:865px;width:13px;height:13px;background:#fff;border:1px solid #8C8C8C;box-sizing:border-box"></div>
</body></html>
